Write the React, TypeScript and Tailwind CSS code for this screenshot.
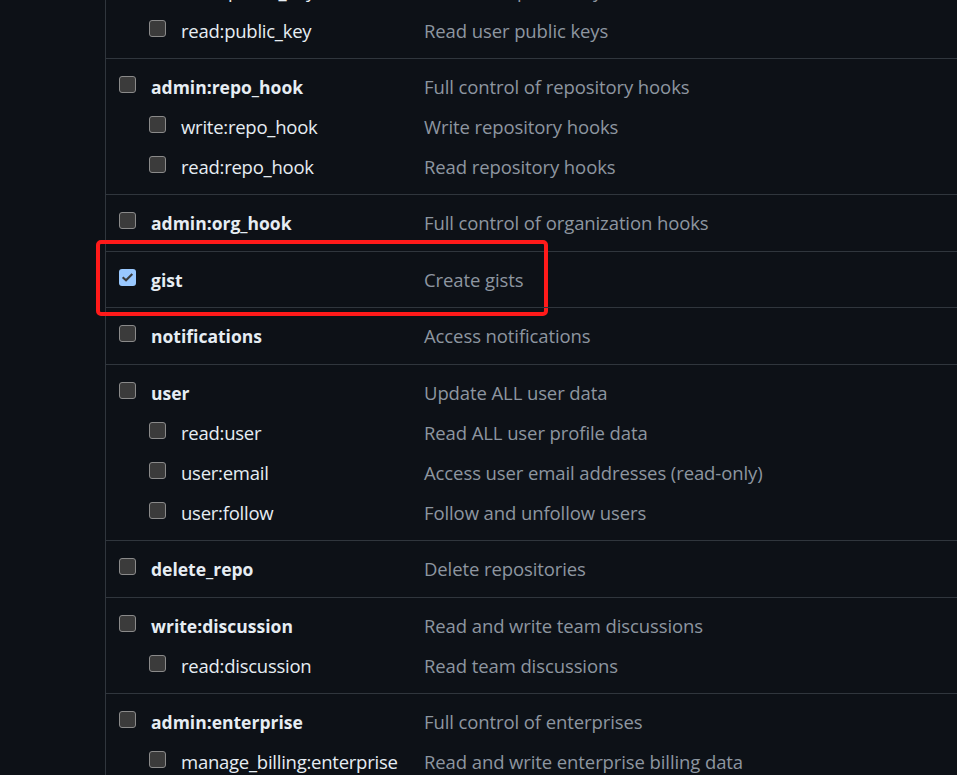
type Scope = { name: string; desc: string; sub?: boolean; checked?: boolean };

const groups: Scope[][] = [
  [
    { name: 'write:public_key', desc: 'Write user public keys', sub: true },
    { name: 'read:public_key', desc: 'Read user public keys', sub: true },
  ],
  [
    { name: 'admin:repo_hook', desc: 'Full control of repository hooks' },
    { name: 'write:repo_hook', desc: 'Write repository hooks', sub: true },
    { name: 'read:repo_hook', desc: 'Read repository hooks', sub: true },
  ],
  [{ name: 'admin:org_hook', desc: 'Full control of organization hooks' }],
  [{ name: 'gist', desc: 'Create gists', checked: true }],
  [{ name: 'notifications', desc: 'Access notifications' }],
  [
    { name: 'user', desc: 'Update ALL user data' },
    { name: 'read:user', desc: 'Read ALL user profile data', sub: true },
    { name: 'user:email', desc: 'Access user email addresses (read-only)', sub: true },
    { name: 'user:follow', desc: 'Follow and unfollow users', sub: true },
  ],
  [{ name: 'delete_repo', desc: 'Delete repositories' }],
  [
    { name: 'write:discussion', desc: 'Read and write team discussions' },
    { name: 'read:discussion', desc: 'Read team discussions', sub: true },
  ],
  [
    { name: 'admin:enterprise', desc: 'Full control of enterprises' },
    { name: 'manage_billing:enterprise', desc: 'Read and write enterprise billing data', sub: true },
  ],
];

function Checkbox({ checked }: { checked?: boolean }) {
  if (checked) {
    return (
      <span className="mb-[6px] flex h-[17px] w-[17px] shrink-0 items-center justify-center rounded-[3px] bg-[#99c8ff]">
        <svg viewBox="0 0 16 16" className="h-[13px] w-[13px]" fill="none" stroke="#3b3b3b" strokeWidth="2.6" strokeLinecap="square">
          <path d="M3 8.5l3.2 3L13 4.5" />
        </svg>
      </span>
    );
  }
  return <span className="mb-[6px] h-[17px] w-[17px] shrink-0 rounded-[3px] border border-[#8a8a8a] bg-[#3b3b3b]" />;
}

function Row({ scope }: { scope: Scope }) {
  return (
    <div className={`flex h-10 items-center ${scope.sub ? 'pl-[43px]' : 'pl-[13px]'}`}>
      <Checkbox checked={scope.checked} />
      <span
        className={`ml-[15px] shrink-0 whitespace-nowrap text-[#e6edf3] ${
          scope.sub ? 'w-[243px] text-[18.5px] tracking-[-0.25px]' : 'w-[273px] text-[17.5px] font-bold'
        }`}
      >
        {scope.name}
      </span>
      <span className="whitespace-nowrap text-[18.5px] tracking-[-0.1px] text-[#8d96a0]">{scope.desc}</span>
    </div>
  );
}

export default function App() {
  return (
    <div className="h-[775px] overflow-hidden bg-[#0d1117] font-['Open_Sans',sans-serif]">
      <div className="ml-[105px] mt-[-29px] min-h-[820px] border-l border-[#30363d]">
        {groups.map((g, i) => (
          <div
            key={i}
            className={`relative ${i === 0 ? 'pb-[7px]' : 'border-t border-[#30363d] pt-2'} ${
              i > 0 && g.length > 1 ? 'pb-[7px]' : ''
            } ${i > 0 && g.length === 1 && !g[0].checked ? 'pb-2' : ''} ${g[0].checked ? 'pb-[7px]' : ''}`}
          >
            {g.map((s) => (
              <Row key={s.name} scope={s} />
            ))}
            {g[0].checked && (
              <div className="pointer-events-none absolute left-[-10px] top-[-12px] h-[76px] w-[452px] rounded-[5px] border-4 border-[#ff1a1a]" />
            )}
          </div>
        ))}
      </div>
    </div>
  );
}
